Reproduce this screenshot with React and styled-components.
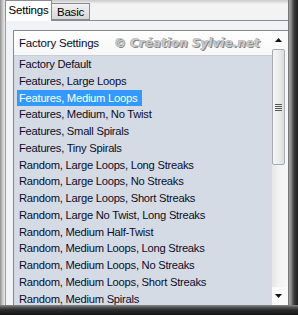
import React from 'react';
import styled, { createGlobalStyle } from 'styled-components';

const Global = createGlobalStyle`
  html, body { margin: 0; padding: 0; background: #fff; }
  body { font-family: "Liberation Sans", Arial, sans-serif; }
`;

const Frame = styled.div`
  width: 298px;
  height: 315px;
  box-sizing: border-box;
  padding: 0 10px 0 5px;
  overflow: hidden;
  display: flex;
  flex-direction: column;
  background:
    linear-gradient(to right, #8e8e8e, #bdbdbd 2px, #dcdcdc 4px, #eeeeee 5px) left top / 5px 100% no-repeat,
    linear-gradient(to right, #4c4c4c, #a4a4a4 1px, #8c8c8c 3px, #3c3c3c 6px, #1c1c1c) right top / 10px 100% no-repeat,
    linear-gradient(to bottom, #c9c9c9, #f3f3f3 4px) top / 100% 20px no-repeat,
    #f3f3f3;
`;

const TabStrip = styled.div`
  height: 20px;
  display: flex;
  align-items: flex-end;
  flex-shrink: 0;
`;

const Tab = styled.div`
  box-sizing: border-box;
  height: ${p => (p.$active ? '21px' : '17px')};
  width: ${p => p.$w}px;
  margin-bottom: ${p => (p.$active ? '-1px' : '0')};
  position: relative;
  z-index: ${p => (p.$active ? 2 : 1)};
  border: 1px solid #898c95;
  border-bottom: ${p => (p.$active ? 'none' : '1px solid #898c95')};
  border-left: ${p => (p.$active ? '1px solid #898c95' : 'none')};
  background: ${p => (p.$active ? '#ffffff' : 'linear-gradient(#f2f2f2, #e4e4e4 50%, #d6d6d6)')};
  font-size: 11.5px;
  letter-spacing: -0.2px;
  color: #000;
  display: flex;
  align-items: center;
  justify-content: center;
  padding-bottom: ${p => (p.$active ? '2px' : '0')};
`;

const Panel = styled.div`
  flex: 1;
  min-height: 0;
  display: flex;
  border-top: 1px solid #898c95;
  border-left: 1px solid #9a9ca2;
  background: #f1f3f6;
  padding: 9px 0 0 7px;
`;

const ListBox = styled.div`
  flex: 1;
  min-width: 0;
  display: flex;
  border-top: 1px solid #828790;
  border-left: 1px solid #828790;
  overflow: hidden;
`;

const MainCol = styled.div`
  flex: 1;
  min-width: 0;
  display: flex;
  flex-direction: column;
`;

const Header = styled.div`
  height: 25px;
  flex-shrink: 0;
  box-sizing: border-box;
  display: flex;
  align-items: center;
  justify-content: space-between;
  padding: 0 12px 0 5px;
  background: linear-gradient(#ffffff, #f7f7f7);
  border-bottom: 1px solid #c9ced6;
  font-size: 11.5px;
  letter-spacing: -0.2px;
  color: #0b0b2a;
`;

const Watermark = styled.span`
  font-family: "DejaVu Sans", sans-serif;
  font-style: italic;
  font-weight: bold;
  font-size: 11.5px;
  letter-spacing: 0.3px;
  color: #cacaca;
  text-shadow: 1px 1px 0 #858585, -0.5px -0.5px 0 #a0a0a0;
  white-space: nowrap;
`;

const List = styled.div`
  flex: 1;
  background: #d5dbe4;
  padding: 0 0 0 3px;
  overflow: hidden;
`;

const Row = styled.div`
  height: 16.75px;
  display: flex;
  align-items: center;
`;

const Label = styled.span`
  display: inline-block;
  line-height: 16.75px;
  padding: 0 5px 0 2px;
  font-size: 11.2px;
  letter-spacing: -0.25px;
  white-space: nowrap;
  color: ${p => (p.$selected ? '#ffffff' : '#0b0b2a')};
  background: ${p => (p.$selected ? '#3399ff' : 'transparent')};
`;

const ScrollBar = styled.div`
  width: 16px;
  flex-shrink: 0;
  display: flex;
  flex-direction: column;
  background: linear-gradient(to right, #e6e6e6, #f2f2f2 40%, #f7f7f7);
`;

const ArrowBtn = styled.div`
  height: 18px;
  flex-shrink: 0;
  display: flex;
  align-items: center;
  justify-content: center;
  padding-right: 3px;
  background: #fafafa;
`;

const Track = styled.div`
  flex: 1;
  display: flex;
  flex-direction: column;
`;

const Thumb = styled.div`
  height: 116px;
  width: 13px;
  box-sizing: border-box;
  border: 1px solid #a8abb0;
  border-radius: 2px;
  background: linear-gradient(to right, #f6f6f6, #ececec 50%, #dcdcdc);
  display: flex;
  flex-direction: column;
  align-items: center;
  justify-content: center;
  gap: 1px;
`;

const Grip = styled.div`
  width: 7px;
  height: 1px;
  background: #555;
`;

const BottomEdge = styled.div`
  height: 10px;
  flex-shrink: 0;
  margin: 0 -10px 0 -5px;
  background: linear-gradient(#8a8a8a, #5a5a5a 2px, #2a2a2a 5px, #151515);
  position: relative;
  z-index: 3;
`;

const Arrow = ({ down }) => (
  <svg width="7" height="4" viewBox="0 0 7 4">
    <path d={down ? 'M0 0 H7 L3.5 4 Z' : 'M0 4 H7 L3.5 0 Z'} fill="#111" />
  </svg>
);

const items = [
  'Factory Default',
  'Features, Large Loops',
  'Features, Medium Loops',
  'Features, Medium, No Twist',
  'Features, Small Spirals',
  'Features, Tiny Spirals',
  'Random, Large Loops, Long Streaks',
  'Random, Large Loops, No Streaks',
  'Random, Large Loops, Short Streaks',
  'Random, Large No Twist, Long Streaks',
  'Random, Medium Half-Twist',
  'Random, Medium Loops, Long Streaks',
  'Random, Medium Loops, No Streaks',
  'Random, Medium Loops, Short Streaks',
  'Random, Medium Spirals',
];

export default function App() {
  return (
    <>
      <Global />
      <Frame>
        <TabStrip>
          <Tab $active $w={47}>Settings</Tab>
          <Tab $w={38}>Basic</Tab>
        </TabStrip>
        <Panel>
          <ListBox>
            <MainCol>
              <Header>
                <span>Factory Settings</span>
                <Watermark>© Création Sylvie.net</Watermark>
              </Header>
              <List>
                {items.map((t, i) => (
                  <Row key={t}>
                    <Label $selected={i === 2}>{t}</Label>
                  </Row>
                ))}
              </List>
            </MainCol>
            <ScrollBar>
              <ArrowBtn><Arrow /></ArrowBtn>
              <Track>
                <Thumb>
                  <Grip /><Grip /><Grip /><Grip />
                </Thumb>
              </Track>
              <ArrowBtn><Arrow down /></ArrowBtn>
            </ScrollBar>
          </ListBox>
        </Panel>
        <BottomEdge />
      </Frame>
    </>
  );
}
